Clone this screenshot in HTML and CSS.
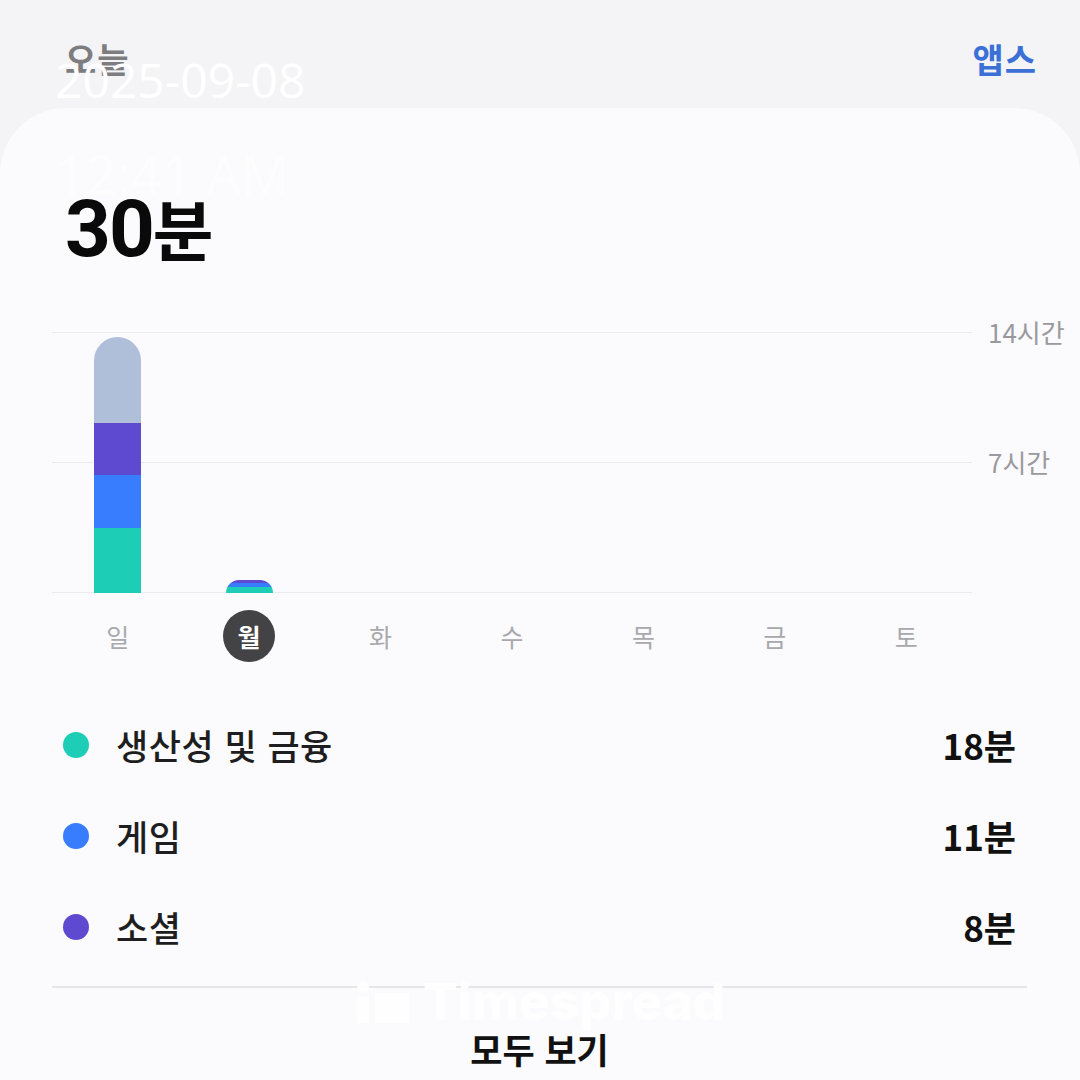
FILE: index.html
```html
<!DOCTYPE html>
<html lang="ko">
<head>
    <meta charset="UTF-8">
    <meta name="viewport" content="width=device-width, initial-scale=1.0">
    <title>오늘 사용 시간</title>
    <link rel="stylesheet" href="styles.css">
</head>
<body>
    <div class="screen">
        <header class="top-bar">
            <span class="today">오늘</span>
            <span class="apps-link">앱스</span>
        </header>

        <main class="card">
            <div class="total">30<span class="unit">분</span></div>

            <div class="chart">
                <div class="plot">
                    <div class="grid-line line-top"></div>
                    <div class="grid-line line-mid"></div>
                    <div class="grid-line line-base"></div>
                    <div class="columns">
                        <div class="col">
                            <div class="bar" style="height: 256px;">
                                <div class="seg seg-other" style="height: 86px;"></div>
                                <div class="seg seg-social" style="height: 52px;"></div>
                                <div class="seg seg-game" style="height: 53px;"></div>
                                <div class="seg seg-prod" style="height: 65px;"></div>
                            </div>
                        </div>
                        <div class="col">
                            <div class="bar" style="height: 13px;">
                                <div class="seg seg-social" style="height: 3px;"></div>
                                <div class="seg seg-game" style="height: 4px;"></div>
                                <div class="seg seg-prod" style="height: 6px;"></div>
                            </div>
                        </div>
                        <div class="col"></div>
                        <div class="col"></div>
                        <div class="col"></div>
                        <div class="col"></div>
                        <div class="col"></div>
                    </div>
                </div>
                <div class="axis">
                    <span>14시간</span>
                    <span>7시간</span>
                </div>
            </div>

            <div class="days">
                <span class="day">일</span>
                <span class="day"><span class="day-active">월</span></span>
                <span class="day">화</span>
                <span class="day">수</span>
                <span class="day">목</span>
                <span class="day">금</span>
                <span class="day">토</span>
            </div>

            <ul class="legend">
                <li class="legend-row">
                    <span class="dot seg-prod"></span>
                    <span class="legend-name">생산성 및 금융</span>
                    <span class="legend-value">18분</span>
                </li>
                <li class="legend-row">
                    <span class="dot seg-game"></span>
                    <span class="legend-name">게임</span>
                    <span class="legend-value">11분</span>
                </li>
                <li class="legend-row">
                    <span class="dot seg-social"></span>
                    <span class="legend-name">소셜</span>
                    <span class="legend-value">8분</span>
                </li>
            </ul>

            <div class="divider"></div>
            <div class="see-all">모두 보기</div>
        </main>

        <!-- capture stamp overlay -->
        <div class="stamp">
            <div class="stamp-date">2025-09-08</div>
            <div class="stamp-time">12:41 AM</div>
        </div>
        <div class="watermark">
            <svg class="watermark-icon" width="56" height="42" viewBox="0 0 56 42">
                <circle cx="8" cy="6" r="6" fill="#ffffff"/>
                <rect x="2" y="16" width="12" height="26" fill="#ffffff"/>
                <rect x="20" y="12" width="34" height="30" fill="#ffffff"/>
            </svg>
            <span>Timespread</span>
        </div>
    </div>
</body>
</html>
```

FILE: styles.css
```css
* {
    box-sizing: border-box;
}
body {
    margin: 0;
    background-color: #f4f4f6;
    font-family: "Noto Sans CJK KR", "Noto Sans", sans-serif;
}
.screen {
    position: relative;
    width: 1080px;
    height: 1080px;
    overflow: hidden;
}
.top-bar {
    display: flex;
    justify-content: space-between;
    align-items: center;
    height: 108px;
    padding: 8px 43px 0 65px;
    font-size: 34px;
    font-weight: 700;
    letter-spacing: 1px;
}
.today {
    color: #7d7d80;
}
.apps-link {
    color: #3b70d6;
}
.card {
    height: 972px;
    background-color: #fbfbfd;
    border-radius: 66px 66px 0 0;
    padding: 74px 53px 0 52px;
}
.total {
    padding-left: 13px;
    font-family: Roboto, "Noto Sans CJK KR", sans-serif;
    font-size: 80px;
    font-weight: 700;
    line-height: 90px;
    color: #0a0a0a;
    letter-spacing: -2px;
}
.total .unit {
    font-family: "Noto Sans CJK KR", sans-serif;
    font-size: 66px;
    letter-spacing: 0;
}
.chart {
    display: flex;
    margin-top: 58px;
    margin-right: -53px;
}
.plot {
    position: relative;
    flex-shrink: 0;
    width: 920px;
    height: 261px;
}
.grid-line {
    position: absolute;
    left: 0;
    right: 0;
    height: 1px;
    background-color: #ebebef;
}
.line-top {
    top: 0;
}
.line-mid {
    top: 130px;
}
.line-base {
    bottom: 0;
}
.columns {
    position: relative;
    display: grid;
    grid-template-columns: repeat(7, 1fr);
    height: 100%;
}
.col {
    display: flex;
    justify-content: center;
    align-items: flex-end;
}
.bar {
    display: flex;
    flex-direction: column;
    width: 47px;
    border-radius: 24px 24px 0 0;
    overflow: hidden;
}
.seg {
    flex-shrink: 0;
}
.seg-other {
    background-color: #afbfda;
}
.seg-social {
    background-color: #5d4ad0;
}
.seg-game {
    background-color: #377dfd;
}
.seg-prod {
    background-color: #1ecdb5;
}
.axis {
    display: flex;
    flex-direction: column;
    gap: 94px;
    margin-top: -18px;
    padding-left: 16px;
    font-size: 26px;
    line-height: 36px;
    color: #9a9a9e;
    white-space: nowrap;
}
.days {
    display: grid;
    grid-template-columns: repeat(7, 1fr);
    width: 920px;
    height: 86px;
    align-items: center;
    font-size: 25px;
    color: #a9a9ad;
}
.day {
    display: flex;
    justify-content: center;
}
.day-active {
    display: flex;
    justify-content: center;
    align-items: center;
    width: 52px;
    height: 52px;
    border-radius: 50%;
    background-color: #434345;
    color: #ffffff;
    font-weight: 700;
}
.legend {
    list-style: none;
    margin: 20px 0 0;
    padding: 0 11px 0 11px;
}
.legend-row {
    display: flex;
    align-items: center;
    height: 91px;
    font-size: 35px;
    font-weight: 500;
    color: #1e1e20;
}
.dot {
    width: 26px;
    height: 26px;
    border-radius: 50%;
    margin-right: 27px;
}
.legend-name {
    flex: 1;
    letter-spacing: 0.5px;
}
.legend-value {
    font-weight: 700;
    color: #111;
}
.divider {
    height: 2px;
    margin-top: 14px;
    background-color: #e6e6ea;
}
.see-all {
    padding-top: 36px;
    text-align: center;
    font-size: 35px;
    font-weight: 700;
    line-height: 50px;
    color: #111;
}
.stamp {
    position: absolute;
    left: 55px;
    top: 46px;
    color: #ffffff;
    font-family: "Open Sans", "Noto Sans", sans-serif;
}
.stamp-date {
    font-size: 48px;
    line-height: 68px;
}
.stamp-time {
    margin-top: 26px;
    font-size: 54px;
    line-height: 68px;
    opacity: 0.55;
}
.watermark {
    position: absolute;
    left: 355px;
    top: 972px;
    display: flex;
    align-items: center;
    gap: 12px;
    color: #ffffff;
    font-family: Inter, "Noto Sans", sans-serif;
    font-size: 51px;
    font-weight: 800;
    line-height: 60px;
    opacity: 0.92;
}
```
